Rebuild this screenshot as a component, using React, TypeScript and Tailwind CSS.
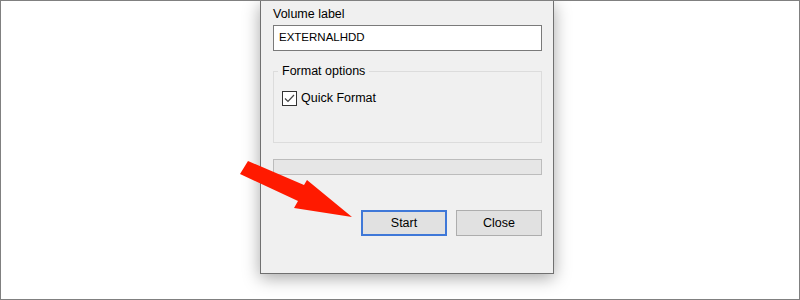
import React from 'react'

const font = { fontFamily: '"Liberation Sans", Arial, sans-serif' }

function Arrow(): React.JSX.Element {
  // red annotation arrow pointing at the Start button
  return (
    <svg className="pointer-events-none absolute left-0 top-0" width="800" height="300" viewBox="0 0 800 300">
      <polygon
        points="247,160 303,184 306,179 351,216 293,207 297,200 239,173"
        fill="#ff1a00"
      />
    </svg>
  )
}

export default function App(): React.JSX.Element {
  return (
    <div
      className="relative h-[300px] w-[800px] overflow-hidden border border-[#808080] bg-white text-[12.5px] text-black"
      style={font}
    >
      <div className="ml-[259px] flex h-[273px] w-[294px] flex-col border-x border-b border-[#707070] bg-[#f0f0f0] px-[12px] pt-[6px] shadow-[0_4px_16px_rgba(0,0,0,0.35)]">
        <div className="leading-[15px]">Volume label</div>
        <div className="mt-[3px] flex h-[26px] w-[269px] items-center border border-[#7a7a7a] bg-white px-[5px] text-[11.5px]">
          EXTERNALHDD
        </div>

        <fieldset className="mt-[13px] h-[79px] w-[269px] border border-[#dcdcdc] pl-[4px]">
          <legend className="px-[4px] leading-[15px]">Format options</legend>
          <label className="mt-[12px] flex items-center gap-[4px] pl-[4px] leading-[15px]">
            <span className="flex h-[15px] w-[15px] items-center justify-center border border-[#333] bg-white">
              <svg width="11" height="9" viewBox="0 0 11 9">
                <path d="M1 4.5 L4 7.5 L10 1" fill="none" stroke="#444" strokeWidth="1.2" />
              </svg>
            </span>
            Quick Format
          </label>
        </fieldset>

        <div className="mt-[16px] h-[16px] w-[269px] border border-[#bcbcbc] bg-[#e6e6e6]" />

        <div className="mt-[35px] flex w-[269px] justify-end gap-[9px]">
          <button className="flex h-[26px] w-[86px] items-center justify-center border-2 border-[#3f78d8] bg-[#e1e1e1]">
            Start
          </button>
          <button className="flex h-[26px] w-[86px] items-center justify-center border border-[#adadad] bg-[#e1e1e1]">
            Close
          </button>
        </div>
      </div>
      <Arrow />
    </div>
  )
}
